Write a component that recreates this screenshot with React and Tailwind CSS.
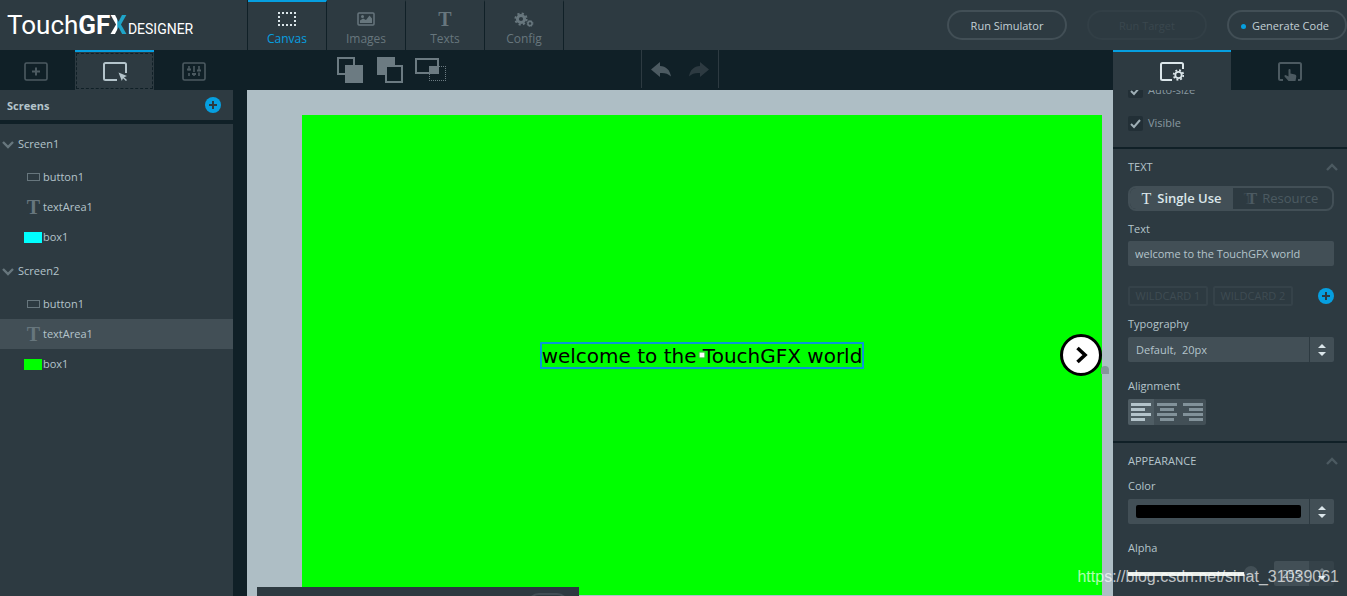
import React, { useState } from "react";
import clsx from "clsx";

function TouchGfxLogo() {
  return (
    <h1
      aria-label="TouchGFX Designer"
      className="flex w-[247px] shrink-0 items-baseline pl-[7px] font-['Roboto',sans-serif] leading-[50px] text-white"
    >
      <span className="text-[26px]">Touch</span>
      <span className="text-[26px] font-bold">GF</span>
      <span className="bg-linear-to-r from-white from-40% to-[#1fa5c9] to-45% bg-clip-text text-[26px] font-bold text-transparent">
        X
      </span>
      <span className="ml-px text-[14px]">DESIGNER</span>
    </h1>
  );
}

function CanvasIcon() {
  return (
    <svg width="20" height="16" viewBox="0 0 20 16">
      <g fill="none" stroke="currentColor" strokeWidth="2" strokeDasharray="2 2">
        <path d="M1 2H19M1 14H19" />
        <path d="M2 5V13M18 5V13" />
      </g>
    </svg>
  );
}

function ImagesIcon() {
  return (
    <svg width="18" height="16" viewBox="0 0 18 16">
      <rect x="1" y="2" width="16" height="12" rx="1" fill="none" stroke="currentColor" strokeWidth="1.5" />
      <circle cx="5.5" cy="5.5" r="1.5" fill="currentColor" />
      <path d="M3 12V9.5L6 7.5L9 9L12.5 4.5L15 7.5V12Z" fill="currentColor" />
    </svg>
  );
}

function ConfigIcon() {
  return (
    <svg width="20" height="16" viewBox="0 0 20 16" fill="none" stroke="currentColor">
      <circle cx="7" cy="8" r="3.6" strokeWidth="3" />
      <circle cx="7" cy="8" r="5.6" strokeWidth="2" strokeDasharray="2.2 2.2" />
      <circle cx="16" cy="12.5" r="2.1" strokeWidth="1.6" />
      <circle cx="16" cy="12.5" r="3" strokeWidth="0.8" strokeDasharray="1.2 1.2" />
    </svg>
  );
}

function SerifT({ className }) {
  return (
    <span aria-hidden="true" className={clsx("font-['Liberation_Serif',serif]", className)}>
      T
    </span>
  );
}

function WidgetsIcon() {
  return (
    <svg width="24" height="19" viewBox="0 0 24 19" fill="none" stroke="currentColor" strokeWidth="2">
      <rect x="1" y="1" width="22" height="17" rx="1.5" strokeWidth="1.6" />
      <path d="M12 5.5V13.5M8 9.5H16" />
    </svg>
  );
}

function ScreensIcon() {
  return (
    <svg width="24" height="19" viewBox="0 0 24 19">
      <path d="M14 18H2.5Q1 18 1 16.5V2.5Q1 1 2.5 1H21.5Q23 1 23 2.5V11" fill="none" stroke="currentColor" strokeWidth="2" />
      <path d="M15.5 10.5L24 14L21 15.2L24 18L23 19L20 16.2L18.8 19Z" fill="currentColor" />
    </svg>
  );
}

function SlidersIcon() {
  return (
    <svg width="24" height="19" viewBox="0 0 24 19" fill="none" stroke="currentColor" strokeWidth="1.6">
      <rect x="1" y="1" width="22" height="17" rx="1.5" />
      <path d="M7 4V8.5M7 11V14M12 4V10M12 12V14M17 4V8M17 10.5V14" />
      <path d="M5 7.5H9M10 12H14M15 8.5H19" strokeWidth="2" />
    </svg>
  );
}

function PropertiesIcon() {
  return (
    <svg width="24" height="19" viewBox="0 0 24 19" fill="none" stroke="currentColor">
      <path d="M12 18H2.5Q1 18 1 16.5V2.5Q1 1 2.5 1H21.5Q23 1 23 2.5V7" strokeWidth="2" />
      <circle cx="18.5" cy="13" r="3.2" strokeWidth="1.8" />
      <circle cx="18.5" cy="13" r="4.8" strokeWidth="1.8" strokeDasharray="1.9 1.87" />
    </svg>
  );
}

function InteractionsIcon() {
  return (
    <svg width="24" height="19" viewBox="0 0 24 19">
      <path d="M5 18H2.5Q1 18 1 16.5V2.5Q1 1 2.5 1H21.5Q23 1 23 2.5V16.5Q23 18 21.5 18H20" fill="none" stroke="currentColor" strokeWidth="2" />
      <path d="M10.5 8Q10.5 7 11.5 7Q12.5 7 12.5 8V11.5L17 12.5Q18.5 13 18.3 14.5L17.5 19H10.5L6.5 14.5Q6 13.2 7.5 13L10.5 14.5Z" fill="currentColor" />
    </svg>
  );
}

function UndoIcon({ className }) {
  return (
    <svg width="20" height="15" viewBox="0 0 20 15" className={className}>
      <path d="M0 7.5L9 0V4C15 4.2 19 8 20 14.5C17 11.3 13 10.6 9 11V15Z" fill="currentColor" />
    </svg>
  );
}

function PlusCircle() {
  return (
    <svg width="16" height="16" viewBox="0 0 16 16">
      <circle cx="8" cy="8" r="8" fill="#069fe0" />
      <path d="M8 4V12M4 8H12" stroke="#2d3a41" strokeWidth="2" />
    </svg>
  );
}

function Chevron({ up }) {
  return (
    <svg width="12" height="8" viewBox="0 0 12 8" fill="none" stroke="currentColor" strokeWidth="2.4">
      <path d={up ? "M1 7L6 2L11 7" : "M1 1L6 6L11 1"} />
    </svg>
  );
}

function UpDown({ dimUp }) {
  return (
    <svg width="8" height="12" viewBox="0 0 8 12" fill="currentColor">
      <path d="M0 4L4 0L8 4Z" opacity={dimUp ? 0.3 : 1} />
      <path d="M0 8L4 12L8 8Z" />
    </svg>
  );
}

const mainTabs = [
  { name: "Canvas", icon: <CanvasIcon /> },
  { name: "Images", icon: <ImagesIcon /> },
  { name: "Texts", icon: <SerifT className="text-[20px] leading-4 font-bold" /> },
  { name: "Config", icon: <ConfigIcon /> },
];

function Header() {
  const [active, setActive] = useState("Canvas");

  return (
    <header className="flex h-[50px] shrink-0 bg-[#2d3a41]">
      <TouchGfxLogo />
      <nav className="flex border-l border-[#102027]">
        {mainTabs.map((tab) => (
          <button
            key={tab.name}
            onClick={() => setActive(tab.name)}
            className={clsx(
              "flex w-[79px] flex-col items-center border-t-2 border-r border-r-[#102027] pt-[9px] text-[12px]",
              active === tab.name ? "border-t-[#069fe0] text-[#069fe0]" : "border-t-transparent text-[#67767d]"
            )}
          >
            <span className={clsx("flex h-4 items-center", active === tab.name && "text-[#dbe6ea]")}>
              {tab.icon}
            </span>
            <span className="mt-1 leading-4">{tab.name}</span>
          </button>
        ))}
      </nav>
      <div className="ml-auto flex items-center gap-5 text-[11px] text-[#c3d0d6]">
        <button className="h-[30px] w-[120px] rounded-full border-2 border-[#424f56] pt-[2px]">Run Simulator</button>
        <button disabled className="h-[30px] w-[120px] rounded-full border-2 border-[#323f46] pt-[2px] text-[#3a474e]">
          Run Target
        </button>
        <button className="flex h-[30px] w-[120px] items-center justify-center gap-[6px] rounded-full border-2 border-[#424f56] pt-[2px] pr-1">
          <span className="size-[5px] rounded-full bg-[#069fe0]"></span>
          Generate Code
        </button>
      </div>
    </header>
  );
}

const screens = [
  { name: "Screen1", color: "bg-[#00ffff]" },
  { name: "Screen2", color: "bg-[#00ff00]" },
];

function Sidebar() {
  const [selected, setSelected] = useState("Screen2/textArea1");

  return (
    <aside className="flex w-[233px] shrink-0 flex-col">
      <div className="flex h-10 shrink-0 text-[#4c5a61]">
        <button aria-label="Widgets" className="flex w-[75px] items-center justify-center pt-[3px] pr-1">
          <WidgetsIcon />
        </button>
        <button
          aria-label="Screens"
          className="w-[79px] border-t-2 border-[#069fe0] bg-[#2d3a41] p-px text-[#b4c4cb]"
        >
          <span className="flex h-full items-center justify-center border border-dashed border-[#102027]">
            <ScreensIcon />
          </span>
        </button>
        <button aria-label="Settings" className="flex flex-1 items-center justify-center pt-[3px]">
          <SlidersIcon />
        </button>
      </div>

      <div className="flex h-[30px] shrink-0 items-center justify-between bg-[#2d3a41] pr-3 pl-[7px]">
        <h2 className="pt-[2px] text-[11px] font-bold text-[#b4c4cb]">Screens</h2>
        <button aria-label="Add screen">
          <PlusCircle />
        </button>
      </div>

      {/* Screen tree */}
      <div className="mt-1 flex-1 overflow-hidden bg-[#2d3a41] pt-px text-[11px] text-[#b4c4cb]">
        {screens.map((screen) => (
          <div key={screen.name}>
            <button className="flex h-[37px] w-full items-center gap-1 pt-[2px] pl-[2px]">
              <span className="text-[#67767d]">
                <Chevron />
              </span>
              {screen.name}
            </button>
            {["button1", "textArea1", "box1"].map((item) => {
              const id = `${screen.name}/${item}`;
              return (
                <button
                  key={id}
                  onClick={() => setSelected(id)}
                  className={clsx("flex h-[30px] w-full items-center pl-6", selected === id && "bg-[#424f56]")}
                >
                  <span className="flex w-[19px] items-center justify-center text-[#67767d]">
                    {item === "button1" && <span className="h-2 w-[13px] border border-[#67767d]"></span>}
                    {item === "textArea1" && <SerifT className="text-[20px] leading-5 font-bold" />}
                    {item === "box1" && <span className={clsx("mr-px h-[11px] w-[18px]", screen.color)}></span>}
                  </span>
                  {item}
                </button>
              );
            })}
          </div>
        ))}
      </div>
    </aside>
  );
}

function Toolbar() {
  return (
    <div className="grid h-10 shrink-0 grid-cols-[1fr_auto_1fr] text-[#6c7b82]">
      <div className="flex items-center gap-3 pl-[90px]">
        <button aria-label="Bring to front">
          <svg width="28" height="26" viewBox="0 0 28 26">
            <rect x="1" y="1" width="16" height="16" fill="none" stroke="currentColor" strokeWidth="2" />
            <rect x="8" y="8" width="18" height="18" fill="currentColor" />
          </svg>
        </button>
        <button aria-label="Send to back">
          <svg width="26" height="26" viewBox="0 0 26 26">
            <rect width="18" height="18" fill="currentColor" />
            <rect x="9" y="9" width="16" height="16" fill="#102027" stroke="currentColor" strokeWidth="2" />
          </svg>
        </button>
        <button aria-label="Clip to parent">
          <svg width="31" height="26" viewBox="0 0 31 26">
            <rect x="1" y="2" width="22" height="14" fill="none" stroke="currentColor" strokeWidth="2" />
            <rect x="14" y="9" width="9" height="7" fill="currentColor" />
            <path d="M14 23.5H31M24 9.5H31M14.5 17V23M30.5 9V23" fill="none" stroke="currentColor" strokeDasharray="1 1" />
          </svg>
        </button>
      </div>
      <div className="mb-[2px] flex w-[78px] items-center justify-between border-x border-[#2d3a41] px-[9px]">
        <button aria-label="Undo" className="text-[#4c5a61]">
          <UndoIcon />
        </button>
        <button aria-label="Redo" disabled className="text-[#2d3a41]">
          <UndoIcon className="-scale-x-100" />
        </button>
      </div>
    </div>
  );
}

function Canvas() {
  return (
    <main className="flex min-w-0 flex-1 flex-col">
      <Toolbar />
      <div className="relative flex flex-1 bg-[#aebec5] pt-[25px] pr-[11px] pb-px pl-[55px]">
        <div className="relative flex flex-1 items-center justify-center bg-[#00ff00]">
          <div className="relative border-2 border-[#0a96d8] pt-[2px] font-['DejaVu_Sans',sans-serif] text-[20px] leading-[21px] whitespace-nowrap text-black">
            welcome to the TouchGFX world
            <span className="absolute top-1/2 left-1/2 size-[5px] -translate-x-1/2 -translate-y-1/2 bg-white outline outline-[#777]/50"></span>
          </div>
          <button aria-label="Next" className="absolute top-1/2 right-0 -translate-y-1/2">
            <svg width="42" height="42" viewBox="0 0 42 42">
              <circle cx="21" cy="21" r="19.5" fill="#fff" stroke="#000" strokeWidth="3" />
              <path d="M17.5 14L25 21L17.5 28" fill="none" stroke="#000" strokeWidth="3.6" />
            </svg>
          </button>
        </div>
        <span className="absolute top-[276px] right-1 h-2 w-2 rounded-t bg-[#87959b]"></span>
        {/* Collapsed output panel */}
        <div className="absolute bottom-0 left-[10px] h-[9px] w-[322px] overflow-hidden bg-[#2d3a41]">
          <div className="mt-[6px] ml-[270px] h-6 w-[42px] rounded-full border-2 border-[#424f56]"></div>
        </div>
      </div>
    </main>
  );
}

function Check({ label }) {
  return (
    <label className="flex h-[33px] items-center gap-[5px] text-[11px] font-medium text-[#8999a0]">
      <span className="relative flex size-[15px]">
        <input
          type="checkbox"
          defaultChecked
          className="peer size-[15px] appearance-none rounded-xs bg-[#222f36]"
        />
        <svg
          width="15"
          height="15"
          viewBox="0 0 15 15"
          className="pointer-events-none absolute inset-0 hidden peer-checked:block"
        >
          <path d="M3 8L6 11L12 4" fill="none" stroke="#9eaeb5" strokeWidth="2" />
        </svg>
      </span>
      {label}
    </label>
  );
}

function SectionTitle({ children }) {
  return (
    <button className="flex h-9 w-full items-center justify-between text-[11px] font-medium">
      {children}
      <span className="-mr-1 text-[#4c5a61]">
        <Chevron up />
      </span>
    </button>
  );
}

const alignments = [
  { name: "Left", d: "M3 5.5H23M3 10.5H17M3 15.5H23M3 20.5H17" },
  { name: "Center", d: "M3 5.5H23M6 10.5H20M3 15.5H23M6 20.5H20" },
  { name: "Right", d: "M3 5.5H23M9 10.5H23M3 15.5H23M9 20.5H23" },
];

function TextSection() {
  const [align, setAlign] = useState("Left");
  const [text, setText] = useState("welcome to the TouchGFX world");

  return (
    <section className="border-b-2 border-[#102027] pr-[13px] pb-4 pl-[15px]">
      <SectionTitle>TEXT</SectionTitle>
      <div className="mt-px flex h-[25px] overflow-hidden rounded-lg border-2 border-[#424f56] text-[13px]">
        <button className="flex w-[103px] items-center justify-center gap-[6px] bg-[#424f56] pt-px font-semibold text-[#dbe6ea]">
          <SerifT className="text-[16px] font-normal" />
          Single Use
        </button>
        <button className="flex flex-1 items-center justify-center gap-[5px] pt-px font-medium text-[#4c5a61]">
          <span className="relative">
            <SerifT className="absolute right-1 bottom-1 text-[16px] leading-4 text-[#3a474e]" />
            <SerifT className="relative text-[16px] font-bold" />
          </span>
          Resource
        </button>
      </div>

      <label htmlFor="text" className="mt-[10px] block leading-4 font-medium">
        Text
      </label>
      <input
        id="text"
        value={text}
        onChange={(e) => setText(e.target.value)}
        className="mt-1 block h-[25px] w-full rounded-xs bg-[#424f56] px-[7px] font-medium"
      />

      <div className="mt-5 flex h-5 items-center gap-[5px] text-[#3f4c53]">
        <button disabled className="h-5 w-20 rounded-xs border-2 border-[#354249] leading-4 font-medium whitespace-nowrap">
          WILDCARD 1
        </button>
        <button disabled className="h-5 w-20 rounded-xs border-2 border-[#354249] leading-4 font-medium whitespace-nowrap">
          WILDCARD 2
        </button>
        <button aria-label="Add wildcard" className="ml-auto">
          <PlusCircle />
        </button>
      </div>

      <label htmlFor="typography" className="mt-[10px] block leading-4 font-medium">
        Typography
      </label>
      <div className="relative mt-[5px]">
        <select
          id="typography"
          className="block h-[25px] w-full appearance-none rounded-xs bg-[#424f56] px-2 pt-px font-medium"
        >
          <option>Default,&nbsp; 20px</option>
        </select>
        <span className="pointer-events-none absolute inset-y-0 right-0 flex w-[25px] items-center justify-center border-l border-[#2d3a41] text-[#dbe6ea]">
          <UpDown />
        </span>
      </div>

      <h3 className="mt-4 leading-4 font-medium">Alignment</h3>
      <div className="mt-[5px] flex w-fit overflow-hidden rounded-xs bg-[#424f56]">
        {alignments.map((a) => (
          <button
            key={a.name}
            aria-label={a.name}
            onClick={() => setAlign(a.name)}
            className={align === a.name ? "bg-[#4f5d64] text-[#b4c4cb]" : "text-[#82929a]"}
          >
            <svg width="26" height="26" viewBox="0 0 26 26" stroke="currentColor" strokeWidth="3">
              <path d={a.d} />
            </svg>
          </button>
        ))}
      </div>
    </section>
  );
}

function AppearanceSection() {
  return (
    <section className="pr-[13px] pl-[15px]">
      <SectionTitle>APPEARANCE</SectionTitle>
      <label htmlFor="color" className="-mt-px block leading-4 font-medium">
        Color
      </label>
      <div className="relative mt-[5px]">
        <input
          id="color"
          type="color"
          defaultValue="#000000"
          className="block h-[25px] w-full appearance-none rounded-xs bg-[#424f56] py-[6px] pr-[33px] pl-2 [&::-webkit-color-swatch]:rounded-xs [&::-webkit-color-swatch]:border-0 [&::-webkit-color-swatch-wrapper]:p-0"
        />
        <span className="pointer-events-none absolute inset-y-0 right-0 flex w-[25px] items-center justify-center border-l border-[#2d3a41] text-[#dbe6ea]">
          <UpDown />
        </span>
      </div>

      <label htmlFor="alpha" className="mt-4 block leading-4 font-medium">
        Alpha
      </label>
      <div className="mt-[5px] flex h-[25px] items-center">
        <input
          id="alpha"
          type="range"
          max="255"
          defaultValue="255"
          className="h-[14px] w-[130px] appearance-none bg-transparent [&::-webkit-slider-runnable-track]:h-1 [&::-webkit-slider-runnable-track]:bg-linear-to-r [&::-webkit-slider-runnable-track]:from-[#e9eee9] [&::-webkit-slider-runnable-track]:from-90% [&::-webkit-slider-runnable-track]:to-transparent [&::-webkit-slider-runnable-track]:to-90% [&::-webkit-slider-thumb]:-mt-[6px] [&::-webkit-slider-thumb]:size-[14px] [&::-webkit-slider-thumb]:appearance-none [&::-webkit-slider-thumb]:rounded-full [&::-webkit-slider-thumb]:bg-[#424f56]"
        />
        <input
          aria-label="Alpha value"
          defaultValue="255"
          className="ml-auto h-[25px] w-[35px] rounded-l-xs bg-[#424f56] text-center font-medium"
        />
        <button
          aria-label="Step alpha"
          className="flex h-[25px] w-[25px] items-center justify-center rounded-r-xs bg-[#354249] text-[#dbe6ea]"
        >
          <UpDown dimUp />
        </button>
      </div>
    </section>
  );
}

function PropertiesPanel() {
  return (
    <aside className="flex w-[234px] shrink-0 flex-col">
      <div className="flex h-10 shrink-0">
        <button
          aria-label="Properties"
          className="flex w-[118px] items-center justify-center border-t-2 border-[#069fe0] bg-[#2d3a41] text-[#dbe6ea]"
        >
          <PropertiesIcon />
        </button>
        <button aria-label="Interactions" className="flex flex-1 items-center justify-center pt-[3px] pl-[2px] text-[#4c5a61]">
          <InteractionsIcon />
        </button>
      </div>
      <div className="flex-1 overflow-hidden bg-[#2d3a41] text-[11px] text-[#b4c4cb]">
        <section className="-mt-4 border-b-2 border-[#102027] pb-[7px] pl-[15px]">
          <Check label="Auto-size" />
          <Check label="Visible" />
        </section>
        <TextSection />
        <AppearanceSection />
      </div>
    </aside>
  );
}

export default function App() {
  return (
    <div className="relative flex h-screen flex-col overflow-hidden bg-[#102027] font-['Open_Sans',sans-serif]">
      <Header />
      <div className="flex min-h-0 flex-1">
        <Sidebar />
        <div className="w-[14px] shrink-0"></div>
        <Canvas />
        <PropertiesPanel />
      </div>
      <p className="pointer-events-none absolute right-2 bottom-[7px] font-['Liberation_Sans',sans-serif] text-[16px] leading-6 text-white/70">
        https://blog.csdn.net/sinat_31039061
      </p>
    </div>
  );
}
